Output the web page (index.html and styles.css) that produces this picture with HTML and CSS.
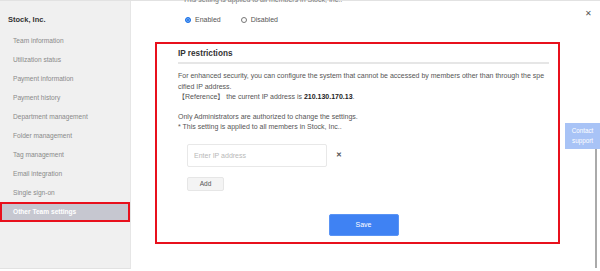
FILE: index.html
```html
<!DOCTYPE html>
<html lang="en">
<head>
  <meta charset="UTF-8" />
  <meta name="viewport" content="width=device-width, initial-scale=1.0"/>
  <title>Other Team settings</title>
  <link rel="stylesheet" href="styles.css">
</head>
<body>
  <div class="app">
    <aside class="sidebar">
      <div class="team-name">Stock, Inc.</div>
      <ul class="menu">
        <li>Team information</li>
        <li>Utilization status</li>
        <li>Payment information</li>
        <li>Payment history</li>
        <li>Department management</li>
        <li>Folder management</li>
        <li>Tag management</li>
        <li>Email integration</li>
        <li>Single sign-on</li>
        <li class="active">Other Team settings</li>
      </ul>
    </aside>

    <main class="main">
      <p class="intro">This setting is applied to all members in Stock, Inc..</p>
      <div class="radio-row">
        <label class="radio"><span class="dot checked"></span>Enabled</label>
        <label class="radio"><span class="dot"></span>Disabled</label>
      </div>

      <section class="ip-box">
        <h3>IP restrictions</h3>
        <p class="desc">For enhanced security, you can configure the system that cannot be accessed by members other than through the spe<br>cified IP address.<br>【Reference】 the current IP address is <strong>210.130.170.13</strong>.</p>
        <p class="note">Only Administrators are authorized to change the settings.<br>* This setting is applied to all members in Stock, Inc..</p>

        <div class="ip-row">
          <input type="text" class="ip-input" placeholder="Enter IP address">
          <span class="remove">&#x2715;</span>
        </div>
        <button class="add-btn">Add</button>

        <div class="actions">
          <button class="save-btn">Save</button>
        </div>
      </section>

      <span class="close">&#x2715;</span>
      <div class="support">
        <div class="support-btn">Contact<br>support</div>
        <div class="support-rail"></div>
      </div>
    </main>
  </div>
</body>
</html>
```

FILE: styles.css
```css
* {
  box-sizing: border-box;
}

body {
  margin: 0;
  font-family: "Liberation Sans", Arial, "Noto Sans CJK JP", sans-serif;
  background: #fff;
  color: #555;
  overflow: hidden;
}

.app {
  display: flex;
  height: 271px;
  border-top: 1px solid #e2e2e2;
}

.sidebar {
  width: 131px;
  height: 268px;
  background: #f0f0f0;
  border-right: 1px solid #e6e6e6;
  border-bottom: 1px solid #e2e2e2;
}

.team-name {
  padding: 14px 0 0 8px;
  font-size: 7.5px;
  font-weight: bold;
  line-height: 10px;
  color: #333;
}

.menu {
  list-style: none;
  margin: 6px 0 0;
  padding: 0;
}

.menu li {
  height: 19px;
  line-height: 19px;
  padding-left: 13px;
  font-size: 6.6px;
  color: #8a8a8a;
}

.menu li.active {
  height: 20px;
  line-height: 20px;
  background: #c6c7d0;
  color: #fff;
  font-weight: bold;
  box-shadow: inset 0 0 0 2px #e8101c;
}

.main {
  flex: 1;
  position: relative;
  padding-left: 24px;
}

.intro {
  margin: -6px 0 0 28px;
  font-size: 7px;
  line-height: 10px;
  color: #777;
}

.radio-row {
  display: flex;
  gap: 20px;
  margin: 10px 0 0 30px;
  font-size: 7px;
  line-height: 10px;
  color: #555;
}

.radio {
  display: flex;
  align-items: center;
  gap: 4px;
}

.dot {
  width: 6px;
  height: 6px;
  border-radius: 50%;
  border: 1px solid #777;
  background: #fff;
}

.dot.checked {
  border-color: #1a73e8;
  background: #1a73e8;
  box-shadow: inset 0 0 0 1px #7fb0f5;
}

.ip-box {
  width: 405px;
  margin-top: 17px;
  border: 2px solid #e8101c;
  padding: 4px 9px 6px 21px;
}

.ip-box h3 {
  margin: 0;
  padding-bottom: 3px;
  font-size: 8.2px;
  line-height: 11px;
  color: #333;
  border-bottom: 2px solid #e6e6e6;
}

.desc,
.note {
  font-size: 7px;
  line-height: 10.5px;
  color: #555;
  white-space: nowrap;
}

.desc {
  margin: 7px 0 0;
}

.desc strong {
  color: #222;
}

.note {
  margin: 9px 0 0;
}

.ip-row {
  display: flex;
  align-items: center;
  gap: 9px;
  margin: 11px 0 0 9px;
}

.ip-input {
  width: 140px;
  height: 23px;
  border: 1px solid #e8e8e8;
  border-radius: 2px;
  padding: 0 6px;
  font-family: inherit;
  font-size: 7px;
  color: #555;
  outline: none;
}

.ip-input::placeholder {
  color: #b8b8b8;
}

.remove {
  font-size: 7px;
  font-weight: bold;
  color: #555;
}

.add-btn {
  display: block;
  width: 37px;
  height: 14px;
  margin: 10px 0 0 9px;
  padding: 0;
  background: #f4f4f4;
  border: 1px solid #e6e6e6;
  border-radius: 2px;
  font-family: inherit;
  font-size: 6.5px;
  color: #555;
}

.actions {
  display: flex;
  justify-content: center;
  margin-top: 23px;
}

.save-btn {
  width: 70px;
  height: 22px;
  background: #3f82f3;
  border: 1px solid #5a94f5;
  border-radius: 2px;
  color: #fff;
  font-family: inherit;
  font-size: 7px;
}

.close {
  position: absolute;
  top: 8px;
  right: 8px;
  font-size: 8px;
  color: #555;
}

.support {
  position: absolute;
  top: 122px;
  right: 0;
  width: 35px;
  display: flex;
  flex-direction: column;
  align-items: flex-end;
}

.support-btn {
  width: 35px;
  height: 26px;
  background: #a8c3f6;
  color: #fff;
  font-size: 6.3px;
  line-height: 10px;
  text-align: center;
  padding-top: 3px;
}

.support-rail {
  width: 2px;
  height: 119px;
  margin-right: 3px;
  background: #aaa;
}
```
